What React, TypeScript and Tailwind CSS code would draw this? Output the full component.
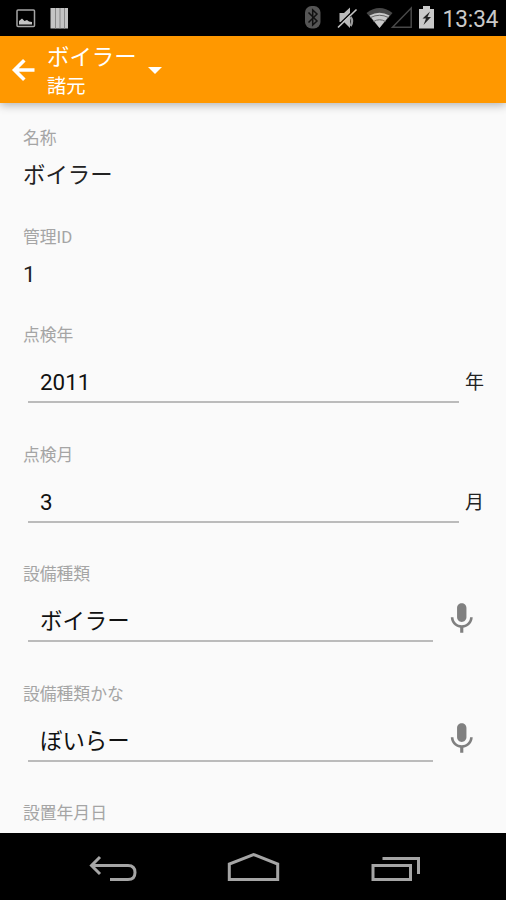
interface FieldProps {
  label: string;
  value: string;
  unit?: string;
}

function FieldLabel({ children }: { children: string }) {
  return <div className="h-6 text-[16.8px] leading-6 text-[#a5a5a5] whitespace-nowrap">{children}</div>;
}

function MicIcon() {
  return (
    <svg className="w-[37.5px] h-[37.5px]" viewBox="0 0 24 24" fill="#808080">
      <path d="M12 14c1.66 0 3-1.34 3-3V5c0-1.66-1.34-3-3-3S9 3.34 9 5v6c0 1.66 1.34 3 3 3zm5.3-3c0 3-2.54 5.1-5.3 5.1S6.7 14 6.7 11H5c0 3.41 2.72 6.23 6 6.72V21h2v-3.28c3.28-.48 6-3.3 6-6.72h-1.7z" />
    </svg>
  );
}

function StaticField({ label, value }: FieldProps) {
  return (
    <div className="h-[98.6px]">
      <FieldLabel>{label}</FieldLabel>
      <div className="mt-[11.4px] text-[22.4px] leading-7 text-[#222]">{value}</div>
    </div>
  );
}

function InputField({ label, value, unit }: FieldProps) {
  return (
    <div className="h-[119.5px]">
      <FieldLabel>{label}</FieldLabel>
      <div className={`flex ml-[5px] h-[56px] ${unit ? 'mr-[22px]' : 'mr-[25px]'}`}>
        <div className="flex-1 border-b-2 border-[#bbb] pl-3 pt-[21px] text-[22.4px] leading-7 text-[#111]">
          {value}
        </div>
        {unit ? (
          <div className="w-[25px] pl-[6px] pt-[22px] text-[19px] leading-7 text-[#222] whitespace-nowrap">{unit}</div>
        ) : (
          <div className="ml-[10px] mr-px mt-[14px] h-[37.5px]">
            <MicIcon />
          </div>
        )}
      </div>
    </div>
  );
}

function StatusBar() {
  return (
    <div className="flex h-9 shrink-0 bg-black">
      <svg className="w-20 h-9" viewBox="0 0 80 36">
        <rect x="17" y="10" width="17.5" height="16.5" rx="1" fill="none" stroke="#a5a5a5" strokeWidth="1.5" />
        <path d="M19 24.5v-3.500l3-2.500 2.5 2.5 2.5-1 2 1.500 3 .5v2.500z" fill="#c4c4c4" />
        <path d="M50.500 8h17.500v20.500H50.500z" fill="#c4c4c4" />
        <path d="M55.500 8v20.500M60 8v20.500M64.500 8v20.500" stroke="#888" strokeWidth="1" />
      </svg>
      <div className="flex-1" />
      <svg className="w-[206px] h-9" viewBox="300 0 206 36">
        {/* bluetooth */}
        <rect x="305" y="6" width="15.500" height="22.500" rx="6.500" fill="#555" />
        <path d="M308.500 12.500l8.500 8.500-4.300 4V10l4.300 4-8.500 8.500" fill="none" stroke="#111" strokeWidth="1.500" />
        {/* muted speaker */}
        <path d="M339.500 13h4.500l6-5.500v20.500L344 22h-4.500z" fill="#bbb" />
        <path d="M350.500 17q3 4 0 9" fill="none" stroke="#999" strokeWidth="2.500" />
        <path d="M337 26.500L355.500 8.500" stroke="#000" strokeWidth="1.500" />
        <path d="M338 27.500L356.500 9.500" stroke="#c4c4c4" strokeWidth="1.700" />
        {/* wifi */}
        <path d="M366.500 13q13-10 26 0L379.500 28z" fill="#484848" />
        <path d="M369.500 15.500q10-5.500 20 0L379.500 28z" fill="#c8c8c8" />
        <path d="M370.500 17.500q9-4.500 18 0M373.500 21.500q6-3.500 12 0" fill="none" stroke="#666" strokeWidth="1" />
        {/* no signal */}
        <path d="M392.500 27.300L411.200 8v19.300z" fill="none" stroke="#484848" strokeWidth="1.500" />
        {/* battery */}
        <path d="M423 6h7v3h4v19.500h-15V9h4z" fill="#c9c9c9" />
        <path d="M430 11.500l-7.500 7h3.500l-2.500 6.500 7.500-8h-3.500z" fill="#222" />
        <text x="442.500" y="26.500" fill="#c9c9c9" fontSize="23.500" fontFamily="Roboto, sans-serif" textLength="56" lengthAdjust="spacingAndGlyphs">
          13:34
        </text>
      </svg>
    </div>
  );
}

function AppBar() {
  return (
    <div className="flex items-center h-[67px] shrink-0 bg-[#ff9800] text-white shadow-[0_2px_9px_rgba(0,0,0,0.3)] z-10">
      <svg className="ml-[11px] w-6 h-6" viewBox="0 0 24 24" fill="none" stroke="#fff" strokeWidth="3.600">
        <path d="M23.500 12H4M13.300 2.200L3.500 12l9.800 9.800" />
      </svg>
      <div className="ml-3 w-[90px] h-[60px] whitespace-nowrap">
        <div className="text-[22.4px] leading-[34px]">ボイラー</div>
        <div className="text-[19.3px] leading-[26px]">諸元</div>
      </div>
      <svg className="ml-[11px] mt-[2px] w-[14px] h-[7px]" viewBox="0 0 14 7" fill="#fff">
        <path d="M0 0h14L7 7z" />
      </svg>
    </div>
  );
}

function NavBar() {
  return (
    <div className="h-[67px] shrink-0 bg-black">
      <svg className="w-full h-full" viewBox="0 833 506 67" fill="none" stroke="#a5a5a5" strokeWidth="3">
        <path d="M91 865.500h37q7 0 7 7t-7 7h-18M100 857l-8.500 8.500 8.500 8.500" />
        <path d="M229.300 879.500V864l24.200-9.500 24.200 9.500v15.500z" />
        <path d="M373 865.500h37.500v14H373zM382.500 858.500h36V874" />
      </svg>
    </div>
  );
}

export default function App() {
  return (
    <div className="flex flex-col w-[506px] h-[900px] overflow-hidden bg-[#fafafa] font-['Roboto','Noto_Sans_CJK_JP',sans-serif]">
      <StatusBar />
      <AppBar />
      <div className="flex-1 min-h-0 overflow-hidden pl-[23px] pt-[23px]">
        <StaticField label="名称" value="ボイラー" />
        <StaticField label="管理ID" value="1" />
        <InputField label="点検年" value="2011" unit="年" />
        <InputField label="点検月" value="3" unit="月" />
        <InputField label="設備種類" value="ボイラー" />
        <InputField label="設備種類かな" value="ぼいらー" />
        <FieldLabel>設置年月日</FieldLabel>
      </div>
      <NavBar />
    </div>
  );
}
